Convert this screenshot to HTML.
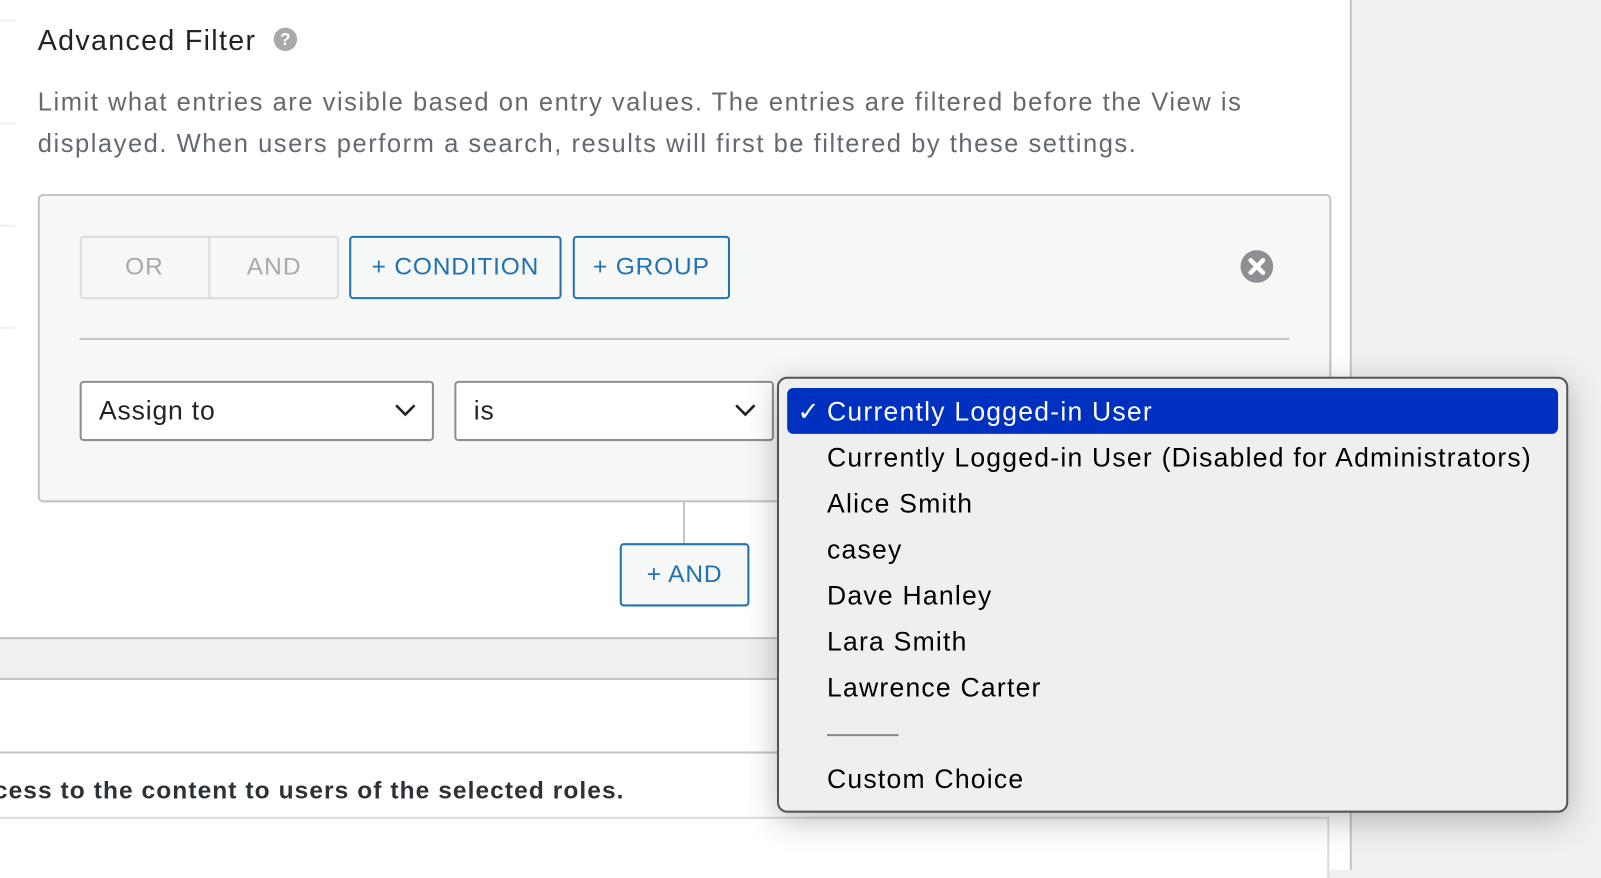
<!DOCTYPE html>
<html><head><meta charset="utf-8"><style>
*{box-sizing:border-box;margin:0;padding:0}
body{width:1601px;height:852px;overflow:hidden;background:#f0f0f1;font-family:"Liberation Sans",sans-serif;position:relative}
#w{position:absolute;left:0;top:0;width:1568px;height:835px;transform:scale(1.021);transform-origin:0 0}
.abs{position:absolute}
.main{left:0;top:0;width:1324px;height:852px;background:#fff;border-right:2px solid #c3c4c7}
.t{white-space:nowrap}
.btn{position:absolute;border:2px solid #2271b1;border-radius:4px;color:#2271b1;font-size:24px;letter-spacing:0.8px;display:flex;align-items:center;justify-content:center;background:#f6f7f7}
.sel{position:absolute;background:#fff;border:2px solid #8c8f94;border-radius:4px;font-size:26px;letter-spacing:0.8px;color:#1d2327;padding-left:17px;display:flex;align-items:center}
.dd{left:761px;top:369px;width:775px;height:427px;background:#efefef;border:2px solid #555;border-radius:10px;box-shadow:0 8px 30px rgba(0,0,0,.25)}
.it{position:absolute;left:47px;font-size:26px;letter-spacing:1.2px;color:#000;white-space:nowrap}
</style></head><body><div id="w">
<div class="abs main"></div>
<div class="abs" style="left:0;top:19px;width:15px;height:2px;background:#eef0f2"></div>
<div class="abs" style="left:0;top:120px;width:15px;height:2px;background:#eef0f2"></div>
<div class="abs" style="left:0;top:220px;width:15px;height:2px;background:#eef0f2"></div>
<div class="abs" style="left:0;top:320px;width:15px;height:2px;background:#eef0f2"></div>
<div class="abs t" style="left:37px;top:24px;font-size:28px;letter-spacing:1.3px;color:#1d2327">Advanced Filter</div>
<div class="abs" style="left:268px;top:27px;width:23px;height:23px;border-radius:50%;background:#a7aaad;color:#fff;font-size:17px;font-weight:bold;text-align:center;line-height:23px">?</div>
<div class="abs t" style="left:37px;top:80px;font-size:25px;letter-spacing:1.5px;color:#646970;line-height:41px">Limit what entries are visible based on entry values. The entries are filtered before the View is<br>displayed. When users perform a search, results will first be filtered by these settings.</div>
<div class="abs" style="left:37px;top:190px;width:1267px;height:302px;background:#f6f7f7;border:2px solid #c3c4c7;border-radius:5px"></div>
<div class="abs" style="left:78px;top:231px;width:254px;height:62px;border:2px solid #dcdcde;border-radius:4px;background:#f6f7f7"></div>
<div class="abs" style="left:204px;top:232px;width:2px;height:60px;background:#dcdcde"></div>
<div class="abs t" style="left:78px;top:248px;width:127px;text-align:center;font-size:24px;letter-spacing:1px;color:#a7aaad">OR</div>
<div class="abs t" style="left:205px;top:248px;width:127px;text-align:center;font-size:24px;letter-spacing:1px;color:#a7aaad">AND</div>
<div class="btn" style="left:342px;top:231px;width:208px;height:62px">+ CONDITION</div>
<div class="btn" style="left:561px;top:231px;width:154px;height:62px">+ GROUP</div>
<svg class="abs" style="left:1215px;top:245px" width="32" height="32" viewBox="0 0 32 32"><circle cx="16" cy="16" r="16" fill="#8c8f94"/><path d="M10 10L22 22M22 10L10 22" stroke="#fff" stroke-width="4.5" stroke-linecap="round"/></svg>
<div class="abs" style="left:78px;top:331px;width:1185px;height:2px;background:#c3c4c7"></div>
<div class="sel" style="left:78px;top:373px;width:347px;height:59px">Assign to</div>
<svg class="abs" style="left:386px;top:395px" width="22" height="14"><path d="M2 2L11 11L20 2" stroke="#1d2327" stroke-width="2.5" fill="none"/></svg>
<div class="sel" style="left:445px;top:373px;width:313px;height:59px">is</div>
<svg class="abs" style="left:719px;top:395px" width="22" height="14"><path d="M2 2L11 11L20 2" stroke="#1d2327" stroke-width="2.5" fill="none"/></svg>
<div class="abs" style="left:669px;top:492px;width:2px;height:40px;background:#c3c4c7"></div>
<div class="btn" style="left:607px;top:532px;width:127px;height:62px">+ AND</div>
<div class="abs" style="left:0;top:624px;width:1323px;height:42px;background:#f0f0f1;border-top:2px solid #c3c4c7;border-bottom:2px solid #c3c4c7"></div>
<div class="abs" style="left:0;top:736px;width:1323px;height:2px;background:#c3c4c7"></div>
<div class="abs t" style="left:-6px;top:761px;font-size:24px;letter-spacing:1.05px;font-weight:bold;color:#2c3338">cess to the content to users of the selected roles.</div>
<div class="abs" style="left:0;top:800px;width:1302px;height:60px;border-top:2px solid #dcdcde;border-right:2px solid #dcdcde;background:#fff"></div>
<div class="abs dd">
<div class="abs" style="left:8px;top:9px;width:755px;height:45px;background:#0030c0;border-radius:6px"></div>
<div class="it" style="left:18px;top:17px;color:#fff">✓</div>
<div class="it" style="top:17px;color:#fff">Currently Logged-in User</div>
<div class="it" style="top:62px">Currently Logged-in User (Disabled for Administrators)</div>
<div class="it" style="top:107px">Alice Smith</div>
<div class="it" style="top:152px">casey</div>
<div class="it" style="top:197px">Dave Hanley</div>
<div class="it" style="top:242px">Lara Smith</div>
<div class="it" style="top:287px">Lawrence Carter</div>
<div class="abs" style="left:47px;top:348px;width:70px;height:2px;background:#888"></div>
<div class="it" style="top:377px">Custom Choice</div>
</div>
</div></body></html>
